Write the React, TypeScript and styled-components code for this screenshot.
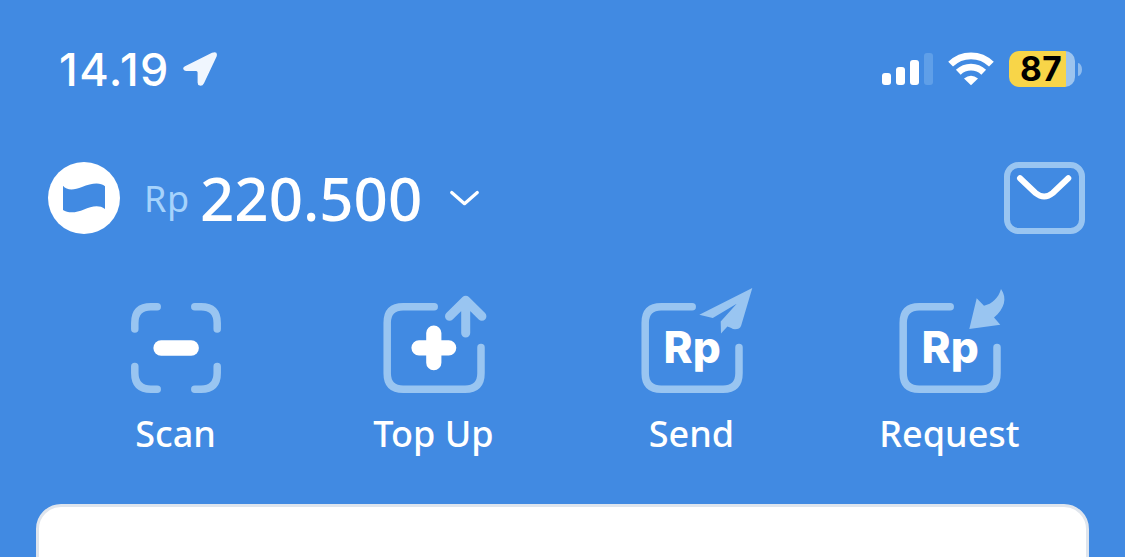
import React from "react";
import styled, { createGlobalStyle } from "styled-components";

const blue = "#418ae2";
const soft = "#99c5f1";

const GlobalStyle = createGlobalStyle`
  * { box-sizing: border-box; }
  body { margin: 0; background: ${blue}; overflow: hidden; }
`;

const Screen = styled.main`
  width: 1125px;
  height: 557px;
  overflow: hidden;
  display: flex;
  flex-direction: column;
  background: ${blue};
  color: #fff;
  font-family: "Noto Sans", "Open Sans", sans-serif;

  > * {
    flex-shrink: 0;
  }
`;

const StatusBar = styled.header`
  display: flex;
  align-items: center;
  justify-content: space-between;
  height: 138px;
  padding: 0 43px 0 59px;
`;

const StatusGroup = styled.div<{ $gap: number }>`
  display: flex;
  align-items: center;
  gap: ${(p) => p.$gap}px;
`;

const Clock = styled.time`
  width: 110px;
  padding-top: 1px;
  font: 550 45px/54px Inter, sans-serif;
  letter-spacing: 1.5px;
  white-space: nowrap;
`;

const Battery = styled.div`
  display: flex;
  align-items: center;
  gap: 3px;
`;

const BatteryBody = styled.div<{ $level: number }>`
  width: 66px;
  height: 36px;
  padding-right: 2px;
  border-radius: 10px;
  background: linear-gradient(to right, #f8d548 ${(p) => p.$level}%, #9cc4ef ${(p) => p.$level}%);
  color: #000;
  text-align: center;
  font: 700 33.5px/37px Inter, sans-serif;
  letter-spacing: 0.4px;
`;

const BatteryNub = styled.div`
  width: 4px;
  height: 13px;
  border-radius: 0 4px 4px 0 / 0 6.5px 6.5px 0;
  background: #8dbbee;
`;

const AccountRow = styled.section`
  display: flex;
  align-items: center;
  height: 72px;
  margin-top: 24px;
  padding: 0 40px 0 48px;
`;

const Currency = styled.span`
  width: 56px;
  margin-left: 24px;
  padding-top: 2px;
  color: #a6d3fc;
  font-size: 36px;
  font-weight: 450;
  line-height: 72px;
  letter-spacing: 0.6px;
`;

const Amount = styled.span`
  width: 223px;
  font-size: 60px;
  font-weight: 500;
  line-height: 72px;
  white-space: nowrap;
`;

const Chevron = styled.svg`
  margin-left: 25px;
`;

const Inbox = styled.svg`
  margin-left: auto;
`;

const Actions = styled.nav`
  display: grid;
  grid-template-columns: repeat(4, 258px);
  margin-top: 51px;
  padding-left: 47px;
`;

const Action = styled.div`
  display: flex;
  flex-direction: column;
  align-items: center;
`;

const ActionIcon = styled.svg`
  display: block;
  overflow: visible;
  fill: none;
  stroke-linecap: round;
  stroke-linejoin: round;
`;

const ActionLabel = styled.span`
  margin-top: 15px;
  padding-right: 1px;
  font-size: 36px;
  font-weight: 500;
  line-height: 48px;
`;

const Card = styled.section`
  width: 1053px;
  height: 120px;
  margin: 46px 0 0 36px;
  border: 3px solid #dfe5ed;
  border-radius: 25px;
  background: #fff;
`;

const Frame = () => (
  <path
    d="M60.2 21.8H29.2Q13.2 21.8 13.2 37.8V88.2Q13.2 104.2 29.2 104.2H91Q107 104.2 107 88.2V62.4"
    stroke={soft}
    strokeWidth="7.5"
  />
);

const Rupiah = () => (
  <text x="31.5" y="78" fill="#fff" fontFamily="Inter, sans-serif" fontWeight="800" fontSize="44" letterSpacing="0">
    Rp
  </text>
);

const ScanIcon = () => (
  <>
    <path
      d="M18.8 44V38Q18.8 21.8 35 21.8H41.2M78.8 21.8H85Q101.2 21.8 101.2 38V44M101.2 81.5V88Q101.2 104.2 85 104.2H78.8M41.2 104.2H35Q18.8 104.2 18.8 88V81.5"
      stroke={soft}
      strokeWidth="7.5"
    />
    <path d="M45.1 63H75.2" stroke="#fff" strokeWidth="15.4" />
  </>
);

const TopUpIcon = () => (
  <>
    <Frame />
    <path d="M91.7 48V15.5M75.5 31.3L91.7 15.2L107.9 31.3" stroke={soft} strokeWidth="9" />
    <path d="M45 62.8H74.7M59.8 48V77.7" stroke="#fff" strokeWidth="15.2" />
  </>
);

const SendIcon = () => (
  <>
    <Frame />
    <path
      d="M120.3 3L67.3 29.8L80.8 33L104.7 18.8L88.7 36.5L89 48.5L95.4 41.6C98.4 42.3 100 44.3 103 44.3C106 44.3 108.4 43.2 109.2 40.5Z"
      fill={soft}
    />
    <Rupiah />
  </>
);

const RequestIcon = () => (
  <>
    <Frame />
    <path
      d="M79.3 44L86.7 13.3L94 20.7C102 19 108.5 13 111 4C117.5 13 114.5 24 104 32.5L110.3 39.7Z"
      fill={soft}
    />
    <Rupiah />
  </>
);

const actions = [
  { label: "Scan", Icon: ScanIcon },
  { label: "Top Up", Icon: TopUpIcon },
  { label: "Send", Icon: SendIcon },
  { label: "Request", Icon: RequestIcon },
];

export default function App() {
  return (
    <Screen>
      <GlobalStyle />
      <StatusBar>
        <StatusGroup $gap={14}>
          <Clock>14.19</Clock>
          <svg width="34" height="34" viewBox="0 0 34 34">
            <path
              d="M2 14.2L29 .8Q35.2-1.2 33.6 4.6L21 31.2Q19.4 34.2 16.8 33.6Q14.6 33 14.6 30.4V20.4Q14.6 18.9 13.2 18.9H3Q.4 18.7 .2 16.8Q.1 15 2 14.2Z"
              fill="#f0f6fe"
            />
          </svg>
        </StatusGroup>
        <StatusGroup $gap={15}>
          <svg width="51" height="32" viewBox="0 0 51 32" fill="#fff">
            <rect x="0" y="20" width="9" height="12" rx="3" />
            <rect x="14" y="14" width="9" height="18" rx="3" />
            <rect x="28" y="7" width="9" height="25" rx="3" />
            <rect x="42" y="0" width="9" height="32" rx="3" fill="#5f9fe8" />
          </svg>
          <svg width="46" height="34" viewBox="0 0 46 34" fill="none" stroke="#fff" strokeWidth="6.8">
            <path d="M2.6 12.2A29 29 0 0 1 43.4 12.2" />
            <path d="M10.3 20.2A18.2 18.2 0 0 1 35.7 20.2" />
            <path d="M23 33.2L16 26.6Q23 21 30 26.6Z" fill="#fff" stroke="none" />
          </svg>
          <Battery>
            <BatteryBody $level={87}>87</BatteryBody>
            <BatteryNub />
          </Battery>
        </StatusGroup>
      </StatusBar>

      <AccountRow>
        <svg width="72" height="72" viewBox="0 0 72 72">
          <circle cx="36" cy="36" r="36" fill="#fff" />
          <path
            d="M15 23.8C19 28.8 26 28.3 34 25C43 21.3 52 19.8 57 24.2V47C51 42.4 43 44.5 36 47.5C28 51 20 51.3 15 48Z"
            fill={blue}
          />
        </svg>
        <Currency>Rp</Currency>
        <Amount>220.500</Amount>
        <Chevron width="32" height="20" viewBox="0 0 32 20" fill="none" stroke="#fff" strokeWidth="3.2" strokeLinecap="round" strokeLinejoin="round">
          <path d="M3.7 4.5L16.5 15.7L29.3 4.5" />
        </Chevron>
        <Inbox width="81" height="72" viewBox="0 0 81 72" fill="none">
          <rect x="3" y="3" width="75" height="66" rx="11.5" stroke={soft} strokeWidth="6" />
          <path d="M16 16.3L31.5 31Q40.2 38 48.8 31L64.3 16.3" stroke="#fff" strokeWidth="6" strokeLinecap="round" />
        </Inbox>
      </AccountRow>

      <Actions>
        {actions.map(({ label, Icon }) => (
          <Action key={label}>
            <ActionIcon width="120" height="110" viewBox="0 0 120 110">
              <Icon />
            </ActionIcon>
            <ActionLabel>{label}</ActionLabel>
          </Action>
        ))}
      </Actions>

      <Card />
    </Screen>
  );
}
